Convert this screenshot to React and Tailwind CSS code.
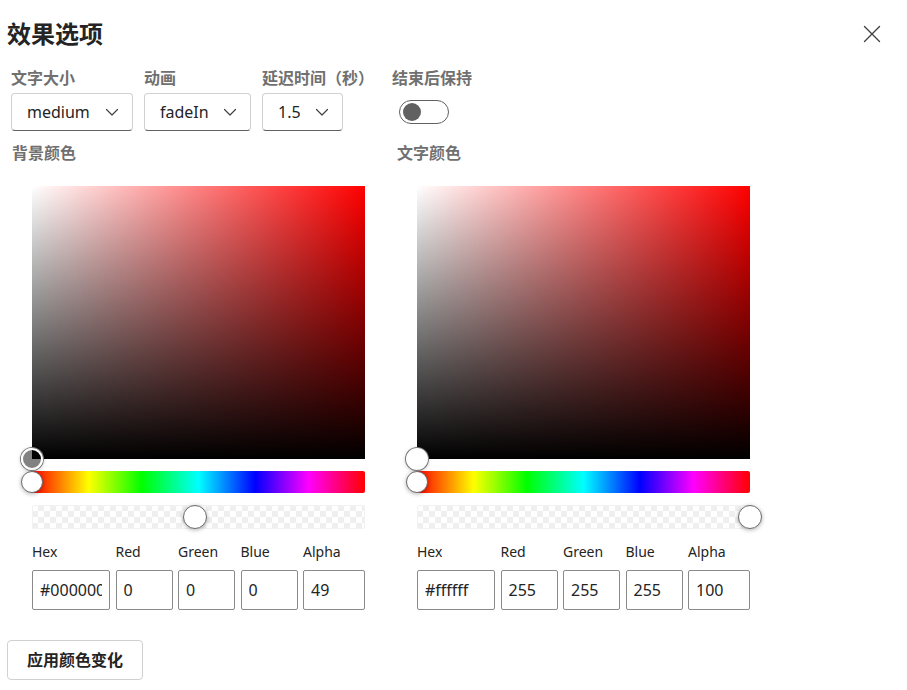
import React from "react";

const font = { fontFamily: '"Noto Sans", "Noto Sans CJK SC", sans-serif' };

const Chevron = () => (
  <svg width="16" height="16" viewBox="0 0 16 16" fill="none">
    <path d="M2.5 5.5 8 11l5.5-5.5" stroke="#424242" strokeWidth="1.2" strokeLinecap="round" strokeLinejoin="round" />
  </svg>
);

const Select = ({ value, width }) => (
  <div
    className={`${width} h-[38px] flex items-center justify-between pl-[15px] pr-[12px] border border-[#d1d1d1] border-b-[#616161] rounded-[4px] bg-white text-[16px] text-[#242424]`}
  >
    <span>{value}</span>
    <Chevron />
  </div>
);

const Field = ({ label, children }) => (
  <div className="flex flex-col gap-[4px]">
    <div className="text-[16px] leading-[22px] font-bold text-[#707070]">{label}</div>
    {children}
  </div>
);

const ColorPicker = ({ label, thumbFill, alphaPos, values }) => {
  const cols = ["Hex", "Red", "Green", "Blue", "Alpha"];
  return (
    <div className="w-[385px] flex flex-col">
      <div className="text-[16px] leading-[22px] font-bold text-[#707070]">{label}</div>
      <div className="ml-[20px] mt-[22px] w-[333px] flex flex-col">
        <div className="relative h-[273px] w-[333px]">
          <div className="absolute inset-0 bg-[linear-gradient(to_top,#000,transparent),linear-gradient(to_right,#fff,#f00)]" />
          <div
            className="absolute left-[-11px] bottom-[-11px] w-[22px] h-[22px] rounded-full border-2 border-white ring-1 ring-[#7a7a7a] shadow-[0_1px_4px_rgba(0,0,0,0.3)]"
            style={{ background: thumbFill }}
          />
        </div>
        <div className="relative mt-[12px] h-[22px] rounded-[2px] bg-[linear-gradient(to_right,#f00_0%,#ff0_17%,#0f0_33%,#0ff_50%,#00f_67%,#f0f_83%,#f00_100%)]">
          <div className="absolute left-[-11px] top-0 w-[22px] h-[22px] rounded-full bg-white border border-[#6b6b6b] shadow-[0_1px_4px_rgba(0,0,0,0.3)]" />
        </div>
        <div className="relative mt-[12px] h-[24px] rounded-[2px] bg-white bg-[repeating-conic-gradient(#efefef_0%_25%,#fff_0%_50%)] bg-[length:12px_12px] shadow-[inset_0_0_0_1px_#f2f2f2]">
          <div
            className="absolute top-[0px] w-[24px] h-[24px] -translate-x-1/2 rounded-full bg-white border border-[#6b6b6b] shadow-[0_1px_4px_rgba(0,0,0,0.3)]"
            style={{ left: alphaPos }}
          />
        </div>
        <div className="mt-[13px] grid grid-cols-[78px_57px_57px_57px_62px] gap-x-[5.5px] gap-y-[8px]">
          {cols.map((c) => (
            <div key={c} className="text-[14px] leading-[20px] text-[#242424]">{c}</div>
          ))}
          {values.map((v, i) => (
            <input
              key={i}
              readOnly
              value={v}
              className="h-[40px] w-full min-w-0 px-[7px] border border-[#8a8a8a] rounded-[2px] text-[16px] text-[#242424] outline-none bg-white"
              style={font}
            />
          ))}
        </div>
      </div>
    </div>
  );
};

export default function App() {
  return (
    <div className="w-[907px] h-[690px] bg-white overflow-hidden pl-[7px] pt-[17px]" style={font}>
      <div className="flex items-start justify-between pr-[26px]">
        <h1 className="m-0 text-[24px] leading-[34px] font-bold text-[#242424]">效果选项</h1>
        <svg className="mt-[8px]" width="18" height="18" viewBox="0 0 18 18" fill="none">
          <path d="M1.5 1.5 16.5 16.5M16.5 1.5 1.5 16.5" stroke="#424242" strokeWidth="1.4" strokeLinecap="round" />
        </svg>
      </div>
      <div className="ml-[4px] mt-[16px] flex items-start gap-[11px]">
        <Field label="文字大小">
          <Select value="medium" width="w-[122px]" />
        </Field>
        <Field label="动画">
          <Select value="fadeIn" width="w-[107px]" />
        </Field>
        <Field label="延迟时间（秒）">
          <Select value="1.5" width="w-[81px]" />
        </Field>
        <div className="ml-[7px]">
          <Field label="结束后保持">
            <div className="h-[38px] flex items-center pl-[7px]">
              <div className="w-[50px] h-[24px] rounded-full border border-[#616161] flex items-center px-[3px]">
                <div className="w-[18px] h-[18px] rounded-full bg-[#616161]" />
              </div>
            </div>
          </Field>
        </div>
      </div>
      <div className="ml-[5px] mt-[11px] flex items-start">
        <ColorPicker
          label="背景颜色"
          thumbFill="rgba(0,0,0,0.49)"
          alphaPos="49%"
          values={["#0000007d", "0", "0", "0", "49"]}
        />
        <ColorPicker
          label="文字颜色"
          thumbFill="#ffffff"
          alphaPos="100%"
          values={["#ffffff", "255", "255", "255", "100"]}
        />
      </div>
      <button
        className="mt-[30px] h-[40px] px-[19px] border border-[#d1d1d1] rounded-[4px] bg-white text-[16px] font-bold text-[#242424]"
        style={font}
      >
        应用颜色变化
      </button>
    </div>
  );
}
